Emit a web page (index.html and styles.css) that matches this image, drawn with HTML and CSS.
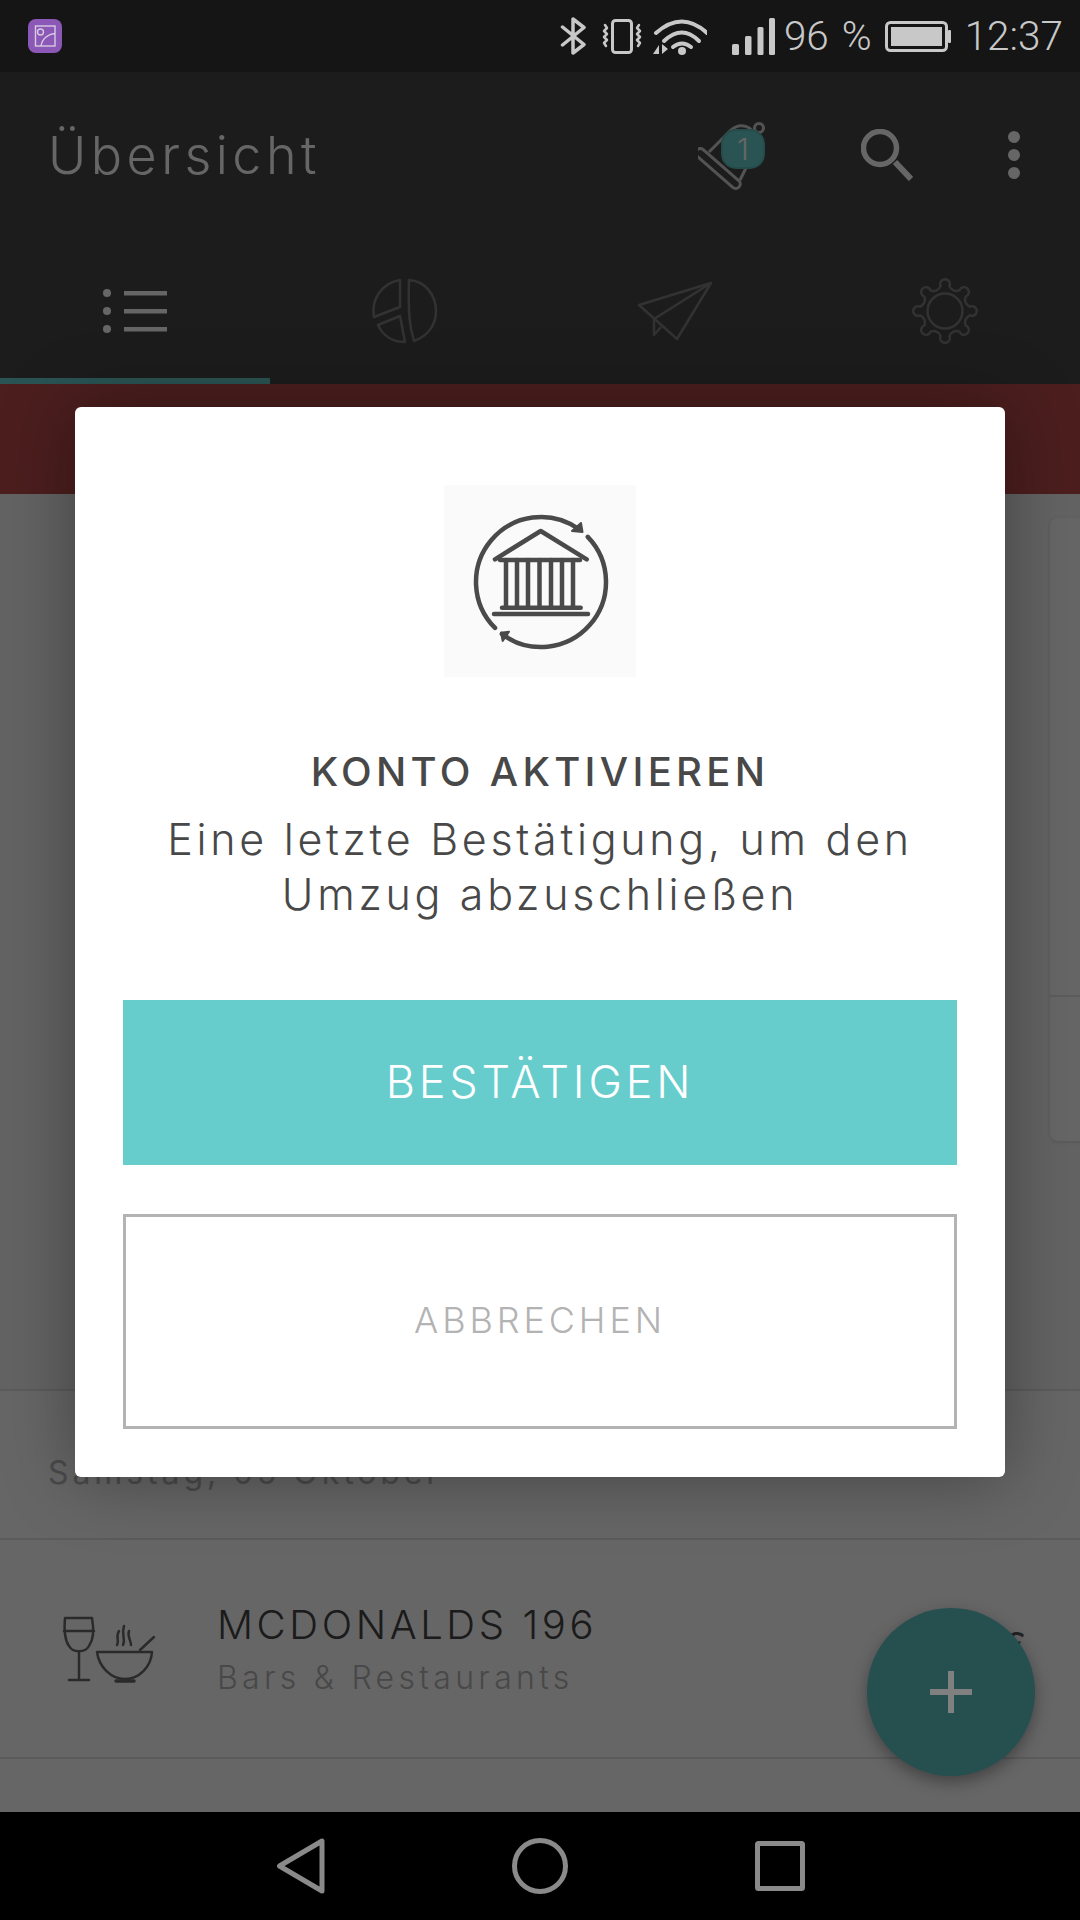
FILE: index.html
```html
<!DOCTYPE html>
<html lang="de">
<head>
    <meta charset="UTF-8">
    <meta name="viewport" content="width=device-width, initial-scale=1.0">
    <title>Konto aktivieren</title>
    <link rel="stylesheet" href="styles.css">
</head>
<body>
<div class="phone">
    <div class="status-bar">
        <svg class="app-icon" width="34" height="34" viewBox="0 0 34 34">
            <rect width="34" height="34" rx="8" fill="#8c58b8"/>
            <rect x="7.5" y="7" width="19.5" height="20" fill="none" stroke="#d6cbe0" stroke-width="1.4"/>
            <circle cx="12.5" cy="13" r="3" fill="none" stroke="#d6cbe0" stroke-width="1.4"/>
            <path d="M13 27 C14 20 20 15 27 14.500" fill="none" stroke="#d6cbe0" stroke-width="1.4"/>
        </svg>
        <div class="status-right">
            <svg width="27" height="38" viewBox="0 0 27 38" fill="none" stroke="#c8c8c8" stroke-width="3.5" stroke-linejoin="round" stroke-linecap="round">
                <path d="M2.500 10 L24 27.500 L13 36 V2 L24 10.500 L2.500 28"/>
            </svg>
            <svg class="gap-vib" width="40" height="35" viewBox="0 0 40 35" fill="none" stroke="#c8c8c8" stroke-linejoin="round" stroke-linecap="round">
                <rect x="10.500" y="1.500" width="19" height="32" rx="3" stroke-width="3"/>
                <path d="M3 6 L5 9 L2 12 L5 15 L2 18 L5 21 L2 24 L4 27" stroke-width="2.500"/>
                <path d="M37 6 L35 9 L38 12 L35 15 L38 18 L35 21 L38 24 L36 27" stroke-width="2.500"/>
            </svg>
            <svg width="54" height="37" viewBox="0 0 54 37" fill="none" stroke="#c8c8c8" stroke-width="4" stroke-linecap="round">
                <path d="M3 15 Q29 -8 54 15"/>
                <path d="M11 23 Q29 6 46 23"/>
                <path d="M20 29 Q29 22 38 29"/>
                <circle cx="29" cy="33" r="4" fill="#c8c8c8" stroke="none"/>
                <path d="M0 36 L6 27 V36 Z M9 26 V36 L15 31 Z" fill="#c8c8c8" stroke="none"/>
            </svg>
            <svg class="gap-signal" width="43" height="37" viewBox="0 0 43 37" fill="#c8c8c8">
                <rect x="0" y="26" width="7" height="11" rx="1.500"/>
                <rect x="13" y="18" width="6.500" height="19" rx="1.500"/>
                <rect x="25.500" y="9" width="6" height="28" rx="1.500"/>
                <rect x="37" y="0" width="6" height="37" rx="1.500"/>
            </svg>
            <span class="status-text status-percent">96 %</span>
            <svg class="gap-batt" width="66" height="31" viewBox="0 0 66 31">
                <rect x="1.500" y="1.500" width="60" height="28" rx="4" fill="none" stroke="#c8c8c8" stroke-width="3"/>
                <rect x="6" y="6" width="51" height="19" fill="#c8c8c8"/>
                <rect x="63" y="9" width="3" height="13" rx="1" fill="#c8c8c8"/>
            </svg>
            <span class="status-text gap-time">12:37</span>
        </div>
    </div>

    <div class="app">
        <div class="toolbar">
            <div class="toolbar-top">
                <h1 class="page-title">Übersicht</h1>
                <div class="bell">
                    <svg width="68" height="68" viewBox="0 0 68 68" fill="none" stroke="#d0d0d0" stroke-width="3">
                        <rect x="-8" y="42" width="56" height="9" rx="4.500" transform="rotate(41 20 46.500)"/>
                        <path d="M11 30 L33 8 C42 0 55 4 57 15 C58 22 56 30 52 38 L42 58"/>
                        <circle cx="61" cy="6" r="4.500"/>
                    </svg>
                    <span class="badge">1</span>
                </div>
                <svg class="icon-search" width="52" height="52" viewBox="0 0 52 52" fill="none" stroke="#fff">
                    <circle cx="19" cy="19" r="16.500" stroke-width="5.500"/>
                    <path d="M34 33 L50 50" stroke-width="6"/>
                </svg>
                <svg class="icon-more" width="12" height="48" viewBox="0 0 12 48" fill="#fff">
                    <circle cx="6" cy="6" r="6"/>
                    <circle cx="6" cy="24" r="6"/>
                    <circle cx="6" cy="42" r="6"/>
                </svg>
            </div>
            <div class="tabs">
                <div class="tab tab-active">
                    <svg width="64" height="44" viewBox="0 0 64 44" fill="#fff">
                        <circle cx="4" cy="4" r="4"/>
                        <circle cx="4" cy="22" r="4"/>
                        <circle cx="4" cy="40" r="4"/>
                        <rect x="21" y="2" width="43" height="4.500"/>
                        <rect x="21" y="20" width="43" height="4.500"/>
                        <rect x="21" y="38" width="43" height="4.500"/>
                    </svg>
                </div>
                <div class="tab">
                    <svg class="tab-icon" width="66" height="66" viewBox="0 0 66 66" fill="none" stroke="#fff" stroke-width="2.500" stroke-linejoin="round">
                        <path d="M28 2 V29 L2 39 C-1 21 10 5 28 2 Z"/>
                        <path d="M6 47 L28 38 L33 64 C21 64 11 58 6 47 Z"/>
                        <path d="M37 2 C53 3 64 17 64 33 C64 47 56 58 42 63 C38 50 36 38 37 2 Z"/>
                    </svg>
                </div>
                <div class="tab">
                    <svg class="tab-icon" width="76" height="60" viewBox="0 0 76 60" fill="none" stroke="#fff" stroke-width="2.500" stroke-linejoin="round">
                        <path d="M2 24 L74 2 L40 58 Z"/>
                        <path d="M74 2 L17 38 V54 L24 46"/>
                    </svg>
                </div>
                <div class="tab">
                    <svg class="tab-icon" width="66" height="66" viewBox="-34 -34 68 68" fill="none" stroke="#fff" stroke-width="2.500">
                        <path d="M25.600 -4.500 A5 5 0 1 1 25.600 4.500 A8 8 0 0 0 21.300 14.900 A5 5 0 1 1 14.900 21.300 A8 8 0 0 0 4.500 25.600 A5 5 0 1 1 -4.500 25.600 A8 8 0 0 0 -14.900 21.300 A5 5 0 1 1 -21.300 14.900 A8 8 0 0 0 -25.600 4.500 A5 5 0 1 1 -25.600 -4.500 A8 8 0 0 0 -21.300 -14.900 A5 5 0 1 1 -14.900 -21.300 A8 8 0 0 0 -4.500 -25.600 A5 5 0 1 1 4.500 -25.600 A8 8 0 0 0 14.900 -21.300 A5 5 0 1 1 21.300 -14.900 A8 8 0 0 0 25.600 -4.500 Z"/>
                        <circle r="18"/>
                    </svg>
                </div>
            </div>
        </div>

        <div class="banner"></div>

        <div class="content">
            <div class="side-card">
                <div class="side-card-top"></div>
            </div>
        </div>

        <div class="list">
            <div class="list-date">Samstag, 05 Oktober</div>
            <div class="list-row">
                <svg class="row-icon" width="96" height="70" viewBox="60 1615 96 70" fill="none" stroke="#6a6a6a" stroke-width="2.500" stroke-linecap="round" stroke-linejoin="round">
                    <path d="M64 1619 H91 C93 1630 93 1640 88 1647 C84 1654 72 1654 68 1647 C63 1640 63 1630 64 1619 Z"/>
                    <path d="M63 1632 H93"/>
                    <path d="M78 1653 V1681 M68 1681 H88"/>
                    <path d="M96 1653 H151 C150 1668 138 1680 124 1680 C110 1680 98 1668 96 1653 Z"/>
                    <path d="M115 1682 H133" stroke-width="3.500"/>
                    <path d="M139 1651 L153 1638"/>
                    <path d="M118 1632 C114 1638 119 1641 116 1646 M123 1627 C120 1636 125 1640 122 1646 M128 1632 C126 1638 130 1641 130 1646"/>
                </svg>
                <div class="row-text">
                    <div class="row-name">MCDONALDS 196</div>
                    <div class="row-sub">Bars &amp; Restaurants</div>
                </div>
                <div class="row-amount">-7,95 €</div>
            </div>
        </div>

        <div class="overlay">
            <div class="dialog">
                <div class="dialog-image">
                    <svg width="192" height="192" viewBox="0 0 192 192" fill="none" stroke="#4a4a4a" stroke-width="4.500" stroke-linecap="round" stroke-linejoin="round">
                        <g transform="translate(1 1)">
                            <path d="M50.040 141.960 A65 65 0 0 1 133.280 42.750"/>
                            <path d="M142.760 50.850 A65 65 0 0 1 56.880 147.910"/>
                            <path d="M137.500 46 L127 45 L136 37 Z" fill="#4a4a4a" stroke-width="2"/>
                            <path d="M56 146.700 L64 145.700 L57.700 155 Z" fill="#4a4a4a" stroke-width="2"/>
                        </g>
                        <path d="M51 74.300 L96.700 46 L142.700 74.300"/>
                        <path d="M56 75 H136"/>
                        <path d="M62 75 V122 M73 75 V122 M84 75 V122 M95.500 75 V122 M107 75 V122 M118 75 V122 M129 75 V122"/>
                        <path d="M58 122.700 H136.700"/>
                        <path d="M50 129 H144"/>
                    </svg>
                </div>
                <h2 class="dialog-title">KONTO AKTIVIEREN</h2>
                <p class="dialog-text">Eine letzte Bestätigung, um den<br>Umzug abzuschließen</p>
                <button class="btn-confirm">BESTÄTIGEN</button>
                <button class="btn-cancel">ABBRECHEN</button>
            </div>
        </div>

        <div class="fab">
            <svg width="42" height="42" viewBox="0 0 42 42" fill="#808080">
                <rect x="18" y="0" width="6" height="42"/>
                <rect x="0" y="18" width="42" height="6"/>
            </svg>
        </div>
    </div>

    <div class="nav-bar">
        <svg width="50" height="56" viewBox="0 0 50 56" fill="none" stroke="#8a8a8a" stroke-width="5" stroke-linejoin="round">
            <path d="M4.500 28 L47 3 V53 Z"/>
        </svg>
        <svg width="56" height="56" viewBox="0 0 56 56" fill="none" stroke="#8a8a8a" stroke-width="5">
            <circle cx="28" cy="28" r="25.500"/>
        </svg>
        <svg width="50" height="50" viewBox="0 0 50 50" fill="none" stroke="#8a8a8a" stroke-width="5" stroke-linejoin="round">
            <rect x="2.500" y="2.500" width="45" height="45" rx="1"/>
        </svg>
    </div>
</div>
</body>
</html>
```

FILE: styles.css
```css
body {
    margin: 0;
    background-color: #000;
    font-family: Inter, "Noto Sans", sans-serif;
}
h1, h2, p {
    margin: 0;
}
svg {
    display: block;
    flex-shrink: 0;
}
.phone {
    width: 1080px;
    height: 1920px;
    display: flex;
    flex-direction: column;
    overflow: hidden;
}

/* status bar */
.status-bar {
    height: 72px;
    background-color: #151515;
    display: flex;
    align-items: center;
    justify-content: space-between;
    padding: 0 17px 0 28px;
}
.status-right {
    display: flex;
    align-items: center;
    gap: 11px;
}
.gap-vib {
    margin-left: 4px;
}
.gap-signal {
    margin-left: 14px;
}
.gap-batt {
    margin-left: 2px;
}
.gap-time {
    margin-left: 3px;
}
.status-text {
    font-family: Roboto, sans-serif;
    font-weight: 300;
    font-size: 40.5px;
    color: #c8c8c8;
}
.status-percent {
    margin-left: -2px;
    word-spacing: 3px;
}

/* app, dimmed by the overlay */
.app {
    flex: 1;
    position: relative;
    display: flex;
    flex-direction: column;
    background-color: #fff;
}
.toolbar {
    height: 312px;
    background-color: #464646;
    display: flex;
    flex-direction: column;
}
.toolbar-top {
    height: 166px;
    display: flex;
    align-items: center;
    padding: 0 60px 0 48px;
    box-sizing: border-box;
}
.page-title {
    font-size: 52px;
    font-weight: 300;
    letter-spacing: 4.5px;
    color: #fff;
    margin-right: auto;
}
.bell {
    position: relative;
    width: 68px;
    height: 68px;
    margin-top: 2px;
}
.badge {
    position: absolute;
    left: 23px;
    top: 7px;
    width: 44px;
    height: 40px;
    box-sizing: border-box;
    border: 2px solid #5fbcbc;
    border-radius: 15px;
    background-color: #69d0d0;
    color: #fff;
    font-size: 30px;
    font-weight: 300;
    line-height: 36px;
    text-align: center;
}
.icon-search {
    margin-left: 95px;
}
.icon-more {
    margin-left: 95px;
}
.tabs {
    flex: 1;
    display: flex;
}
.tab {
    flex: 1;
    display: flex;
    align-items: center;
    justify-content: center;
    padding: 6px 0;
}
.tab-active {
    padding-bottom: 0;
    border-bottom: 6px solid #69d0d0;
}
.tab-icon {
    opacity: 0.3;
}
.banner {
    height: 110px;
    background-color: #bd4c4c;
}
.content {
    height: 895px;
    box-sizing: border-box;
    padding-top: 24px;
    background-color: #f8f8f8;
    display: flex;
    justify-content: flex-end;
    overflow: hidden;
}
.side-card {
    width: 100px;
    height: 623px;
    margin-right: -70px;
    border-radius: 8px;
    background-color: #fff;
    box-shadow: 0 1px 4px rgba(0, 0, 0, 0.15);
}
.side-card-top {
    height: 477px;
    border-bottom: 2px solid #e6e6e6;
}
.list {
    flex: 1;
    background-color: #fff;
    border-top: 2px solid #e4e4e4;
}
.list-date {
    height: 149px;
    box-sizing: border-box;
    padding: 62px 0 0 48px;
    font-size: 32px;
    letter-spacing: 3.9px;
    color: #b9b9b9;
    border-bottom: 2px solid #e4e4e4;
}
.list-row {
    height: 219px;
    box-sizing: border-box;
    padding: 61px 50px 0 61px;
    display: flex;
    align-items: flex-start;
    border-bottom: 2px solid #e4e4e4;
}
.row-icon {
    margin-top: 13px;
    margin-right: 60px;
}
.row-name {
    font-size: 40px;
    line-height: 48px;
    font-weight: 300;
    letter-spacing: 3.6px;
    color: #444;
}
.row-sub {
    margin-top: 9px;
    font-size: 32px;
    line-height: 40px;
    font-weight: 300;
    letter-spacing: 4.3px;
    color: #b4b4b4;
}
.row-amount {
    margin-left: auto;
    font-size: 36px;
    line-height: 48px;
    margin-top: 20px;
    letter-spacing: 4px;
    color: #555;
}

/* dialog */
.overlay {
    position: absolute;
    top: 0;
    left: 0;
    right: 0;
    bottom: 0;
    background-color: rgba(0, 0, 0, 0.6);
    display: flex;
    align-items: center;
    justify-content: center;
}
.dialog {
    width: 930px;
    box-sizing: border-box;
    padding: 78px 48px 48px;
    background-color: #fff;
    border-radius: 6px;
    box-shadow: 0 0 70px rgba(0, 0, 0, 0.35);
    display: flex;
    flex-direction: column;
    align-items: center;
    color: #484848;
}
.dialog-image {
    width: 192px;
    height: 192px;
    background-color: #fafafa;
}
.dialog-title {
    margin-top: 70px;
    font-size: 40px;
    line-height: 50px;
    font-weight: 500;
    letter-spacing: 4.3px;
}
.dialog-text {
    margin-top: 15px;
    font-size: 43px;
    line-height: 55px;
    font-weight: 300;
    letter-spacing: 3.7px;
    text-align: center;
}
.btn-confirm, .btn-cancel {
    width: 100%;
    font-family: inherit;
    font-weight: 300;
    border-radius: 0;
}
.btn-confirm {
    margin-top: 78px;
    height: 165px;
    padding: 0 0 3px;
    border: none;
    background-color: #66cdcc;
    color: #fff;
    font-size: 45px;
    letter-spacing: 3.8px;
}
.btn-cancel {
    margin-top: 49px;
    height: 215px;
    padding: 0 0 3px;
    border: 3px solid #b3b3b3;
    background-color: #fff;
    color: #b3b3b3;
    font-size: 36px;
    letter-spacing: 3.9px;
}
.fab {
    position: absolute;
    left: 867px;
    top: 1536px;
    width: 168px;
    height: 168px;
    border-radius: 50%;
    background-color: #25504f;
    box-shadow: 0 6px 16px rgba(0, 0, 0, 0.35);
    display: flex;
    align-items: center;
    justify-content: center;
}

/* navigation bar */
.nav-bar {
    height: 108px;
    background-color: #000;
    display: flex;
    align-items: center;
    justify-content: center;
    gap: 187px;
}
```
